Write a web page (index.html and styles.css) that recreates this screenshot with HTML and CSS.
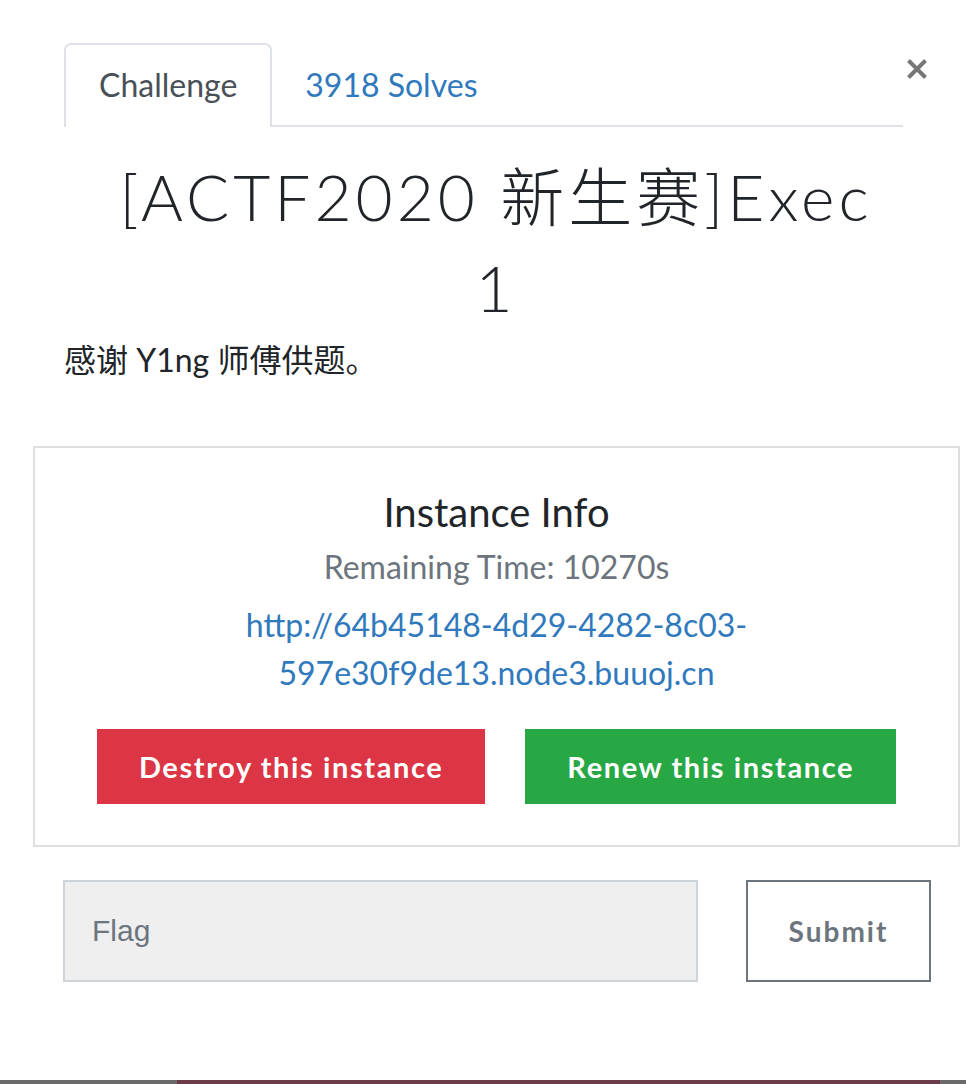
FILE: index.html
```html
<!DOCTYPE html>
<html lang="zh">
<head>
<meta charset="utf-8">
<title>[ACTF2020 新生赛]Exec 1</title>
<link rel="stylesheet" href="styles.css">
</head>
<body>
<div class="page">
  <div class="modal">
    <div class="header">
      <nav class="nav">
        <a class="tab active">Challenge</a>
        <a class="tab link">3918 Solves</a>
      </nav>
      <button class="close" aria-label="Close">
        <svg width="22" height="22" viewBox="0 0 22 22"><path d="M2.5 2.5 L19.5 19.5 M19.5 2.5 L2.5 19.5" stroke="#777" stroke-width="4" stroke-linecap="butt"/></svg>
      </button>
    </div>
    <h2 class="title">[ACTF2020 新生赛]Exec 1</h2>
    <p class="desc">感谢 Y1ng 师傅供题。</p>
    <div class="instance">
      <h4 class="inst-title">Instance Info</h4>
      <div class="remaining">Remaining Time: 10270s</div>
      <a class="url">http://64b45148-4d29-4282-8c03-597e30f9de13.node3.buuoj.cn</a>
      <div class="actions">
        <button class="btn destroy">Destroy this instance</button>
        <button class="btn renew">Renew this instance</button>
      </div>
    </div>
    <div class="flag-row">
      <div class="flag-input">Flag</div>
      <button class="submit">Submit</button>
    </div>
  </div>
  <div class="strip"><span class="s1"></span><span class="s2"></span><span class="s3"></span></div>
</div>
</body>
</html>
```
FILE: styles.css
```css
html, body {
  margin: 0;
  padding: 0;
  background: #fff;
}
body {
  font-family: "Lato", "Noto Sans CJK SC", sans-serif;
  color: #212529;
}
.page {
  min-height: 100vh;
  display: flex;
  flex-direction: column;
}
.modal {
  padding-top: 43px;
}
.header {
  display: flex;
  align-items: flex-start;
  margin: 0 38px 0 64px;
}
.nav {
  flex: 1;
  display: flex;
  border-bottom: 2px solid #dee2e6;
}
.tab {
  display: block;
  padding: 22px 33px;
  line-height: 36px;
  font-size: 32px;
  border: 2px solid transparent;
  border-bottom: none;
  margin-bottom: -2px;
  text-decoration: none;
}
.tab.active {
  color: #495057;
  background: #fff;
  border-color: #dee2e6;
  border-radius: 7px 7px 0 0;
  padding-bottom: 24px;
}
.tab.link {
  color: #3079bd;
  padding-left: 31px;
}
.close {
  margin: 15px 0 0 3px;
  padding: 0;
  width: 22px;
  height: 22px;
  border: none;
  background: none;
  display: flex;
}
.title {
  margin: 24px 38px 0 64px;
  padding: 0 40px;
  text-align: center;
  font-weight: 300;
  font-size: 64px;
  line-height: 91px;
  letter-spacing: 4px;
  color: #212529;
}
.desc {
  margin: 4px 64px 0;
  font-size: 32px;
  line-height: 45px;
  color: #212529;
}
.instance {
  margin: 64px 6px 0 33px;
  border: 2px solid #dfdfdf;
  padding: 40px 20px 41px;
  display: flex;
  flex-direction: column;
  align-items: center;
  text-align: center;
}
.inst-title {
  margin: 0;
  font-weight: 400;
  font-size: 40px;
  line-height: 48px;
  color: #212529;
}
.remaining {
  margin-top: 8px;
  font-size: 32px;
  line-height: 45px;
  color: #6c757d;
}
.url {
  margin-top: 12px;
  width: 560px;
  font-size: 32px;
  line-height: 48px;
  color: #3079bd;
}
.actions {
  margin-top: 32px;
  display: flex;
  gap: 40px;
  justify-content: center;
}
.btn {
  height: 75px;
  padding: 0 42px;
  border: none;
  border-radius: 0;
  color: #fff;
  font-family: "Lato", sans-serif;
  font-weight: 700;
  font-size: 29px;
  letter-spacing: 1.6px;
}
.destroy { background: #dc3545; }
.renew { background: #28a745; }
.flag-row {
  display: flex;
  gap: 48px;
  margin: 33px 35px 0 63px;
}
.flag-input {
  flex: 1;
  height: 98px;
  background: #efefef;
  border: 2px solid #ced4da;
  padding-left: 27px;
  display: flex;
  align-items: center;
  font-family: "Liberation Sans", Arial, sans-serif;
  font-size: 30px;
  color: #6c757d;
}
.submit {
  width: 185px;
  height: 102px;
  background: #fff;
  border: 2px solid #6c757d;
  color: #6c757d;
  font-family: "Lato", sans-serif;
  font-weight: 700;
  font-size: 28px;
  letter-spacing: 2px;
}
.strip {
  margin-top: auto;
  height: 4px;
  display: flex;
}
.strip .s1 { width: 177px; background: #6a6a6a; }
.strip .s2 { flex: 1; background: #6c3a48; }
.strip .s3 { width: 26px; background: #6a6a6a; }
```
